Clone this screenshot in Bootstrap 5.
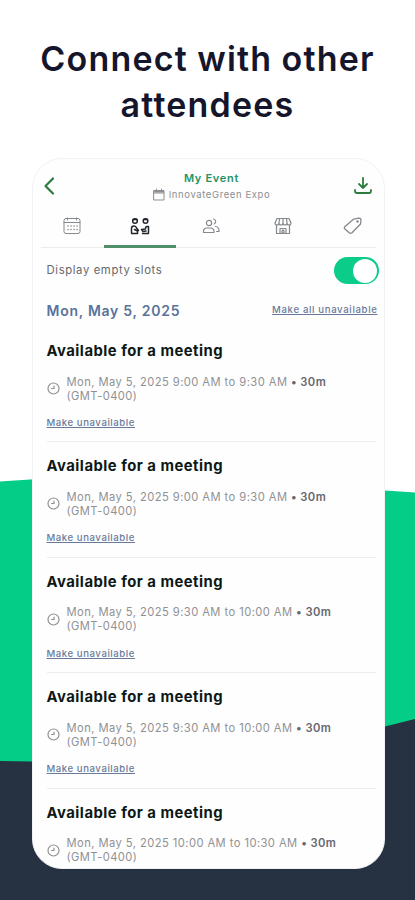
<!DOCTYPE html>
<html lang="en">
<head>
<meta charset="utf-8">
<meta name="viewport" content="width=device-width, initial-scale=1">
<title>Connect with other attendees</title>
<link href="https://cdn.jsdelivr.net/npm/bootstrap@5.3.0/dist/css/bootstrap.min.css" rel="stylesheet">
<style>
body{font-family:Inter,"Liberation Sans",sans-serif;background:#fff;height:900px;overflow:hidden}
.backdrop{z-index:-1;width:415px;height:900px}
.headline{font-size:34px;line-height:46px;font-weight:600;color:#15152b;letter-spacing:1.2px;word-spacing:-.5px;padding-top:36px;height:158px}
.phone{width:353px;height:711px;margin-left:31.5px;border-radius:30px;border:1px solid #f1f2f3;background:#fefefe}
.topbar{height:46px;padding:11px 10px 0 9px}
.ttl{font-size:11px;line-height:16px;font-weight:600;color:#1f9463;letter-spacing:.7px}
.sub{font-size:9.5px;line-height:17px;color:#8d8f92;letter-spacing:.6px}
.tabs{height:43px;margin:0 8px;border-bottom:1px solid #ececee;color:#85888c}
.tabs>div{width:71.5px;height:43px;flex:none;padding-top:12px}
.tabs .on{border-bottom:3px solid #4f9068;color:#20252b}
.inner{padding:0 6px 0 14px}
.togglerow{height:45px;font-size:11.3px;letter-spacing:.62px;color:#66686b}
.switch{width:45px;height:27px;border-radius:14px;background:#0bcc88;padding:1.5px;margin-right:-1px}
.knob{width:24px;height:24px;border-radius:50%;background:#fff}
.dayrow{height:34px}
.day{font-size:14px;font-weight:600;color:#59739b;letter-spacing:.74px}
.act{font-size:9.6px;color:#697a99;text-decoration:underline;letter-spacing:.56px;line-height:14px;font-weight:500}
.act.all{letter-spacing:.65px}
.slot{height:115.4px;border-bottom:1px solid #ededef;margin-right:2px;padding-top:14px}
.slot:last-child{border:0}
.slot h2{font-size:14.8px;line-height:20px;font-weight:700;color:#0c1816;letter-spacing:.5px;margin:0 0 13.5px}
.when{font-size:11.2px;line-height:14px;color:#909194;letter-spacing:.43px;gap:7px;margin-bottom:13.5px;white-space:nowrap}
.when b{color:#66676f;font-weight:600}
svg{display:block;flex:none}
.ln{fill:none;stroke:currentColor;stroke-linecap:round;stroke-linejoin:round}
</style>
<script src="https://cdn.jsdelivr.net/npm/bootstrap@5.3.0/dist/js/bootstrap.bundle.min.js"></script>
</head>
<body class="position-relative">
<svg class="backdrop position-absolute top-0 start-0" viewBox="0 0 415 900"><path fill="#03cd87" d="M0 481.500 45 478.500H340L385 490.500 415 492.500V780H0z"/><path fill="#263141" d="M0 761 31 761.500H200L385 726.500 415 719V900H0z"/></svg>
<h1 class="headline text-center m-0">Connect with other<br>attendees</h1>
<main class="phone overflow-hidden">
  <header class="topbar d-flex justify-content-between">
    <svg width="28" height="32" viewBox="0 0 28 32" class="ln" style="color:#2c7c40" stroke-width="2.200"><path d="M11 8.500 3.500 16l7.500 7.500"/></svg>
    <div class="text-center"><div class="ttl">My Event</div>
      <div class="sub d-flex align-items-center gap-1"><svg width="12" height="13" viewBox="0 0 12 13" class="ln"><path d="M1 2.500h10v9.500H1zM1 5h10M3.500 1v2.500M8.500 1v2.500"/><path stroke-width="2" d="M2 3.500h8"/></svg>InnovateGreen Expo</div></div>
    <svg width="20" height="32" viewBox="0 0 20 32" class="ln" style="color:#2c7c40" stroke-width="1.800"><path d="M10 8v10M6 14l4 4 4-4M2 20v1q0 2 2 2h12q2 0 2-2v-1"/></svg>
  </header>
  <nav class="tabs d-flex">
    <div class="d-flex justify-content-center" style="width:63.500px"><svg width="18" height="18" viewBox="0 0 18 18" class="ln"><rect x="1" y="1.500" width="16" height="15" rx="2"/><path d="M1 5.500h16M4.500 1v2M13.500 1v2"/><path stroke-width="1.500" d="M5 9h.1M8 9h.1M11 9h.1M14 9h.1M5 12.500h.1M8 12.500h.1M11 12.500h.1M14 12.500h.1"/></svg></div>
    <div class="on d-flex justify-content-center"><svg width="20" height="18" viewBox="0 0 20 18" class="ln" stroke-width="1.500"><circle cx="5" cy="4" r="2.300"/><circle cx="15.500" cy="4" r="2.300"/><path d="M3 2.500h4M13.500 2.500h4M1.500 15.500V11.500q0-2.500 2.500-2.500 2 0 2.500 2l2 2.500M1.500 16.500H7.500V14L4.500 12.500M18.500 15.500V9.500h-1.500q-1.500 0-1.500 2.500l-4 .5 1.500 2 3-.5M18.500 16.500h-6"/></svg></div>
    <div class="d-flex justify-content-center"><svg width="18" height="18" viewBox="0 0 18 18" class="ln" stroke-width="1.200"><circle cx="7" cy="6" r="2.600"/><path d="M1.500 15.500v-1q0-3.500 3.500-3.500h3.500q3.500 0 3.500 3.500v1zM11.500 2a2.600 2.600 0 0 1 .5 5M13.500 9.500q3.500.5 3.500 4v1h-2.500"/></svg></div>
    <div class="d-flex justify-content-center"><svg width="18" height="18" viewBox="0 0 18 18" class="ln" stroke-width="1.200"><path d="M3 1.500h12l2 4.500q0 2-2 2t-2-2q0 2-2 2T9 6q0 2-2 2T5 6q0 2-2 2T1 6zM5.500 1.500 5 6M9 1.500V6M12.500 1.500 13 6M2.500 8v8.500h13V8M6 16.500v-5h6v5M8 14l1-1 1 1v2H8z"/></svg></div>
    <div class="d-flex justify-content-center w-auto ps-3 ms-2"><svg width="20" height="18" viewBox="0 0 20 18" class="ln" stroke-width="1.300"><path d="M10.500 2.200 16 1.200q2 0 2 1.800L17.500 7 9 15.800q-1.400 1.200-2.700 0L2 12q-1.300-1.300 0-2.600z"/><circle cx="14.500" cy="4.500" r=".6"/></svg></div>
  </nav>
  <div class="inner">
    <div class="togglerow d-flex align-items-center justify-content-between">Display empty slots<span class="switch d-flex justify-content-end"><span class="knob"></span></span></div>
    <div class="dayrow d-flex align-items-center justify-content-between"><span class="day">Mon, May 5, 2025</span><span class="act all">Make all unavailable</span></div>
    <section id="slots"></section>
  </div>
</main>
<script>
const times=['9:00 AM to 9:30 AM','9:00 AM to 9:30 AM','9:30 AM to 10:00 AM','9:30 AM to 10:00 AM','10:00 AM to 10:30 AM'];
document.getElementById('slots').innerHTML=times.map((t,i)=>`<article class="slot"><h2>Available for a meeting</h2>
<div class="when d-flex align-items-center"><svg width="13" height="13" viewBox="0 0 13 13" class="ln" stroke-width="1.200"><circle cx="6.500" cy="6.500" r="5.500"/><path d="M7 4v2.500H4.500"/></svg><div>Mon, May 5, 2025 ${t} <b>• 30m</b><br>(GMT-0400)</div></div>
${i<4?'<div class="act">Make unavailable</div>':''}</article>`).join('');
</script>
</body>
</html>
